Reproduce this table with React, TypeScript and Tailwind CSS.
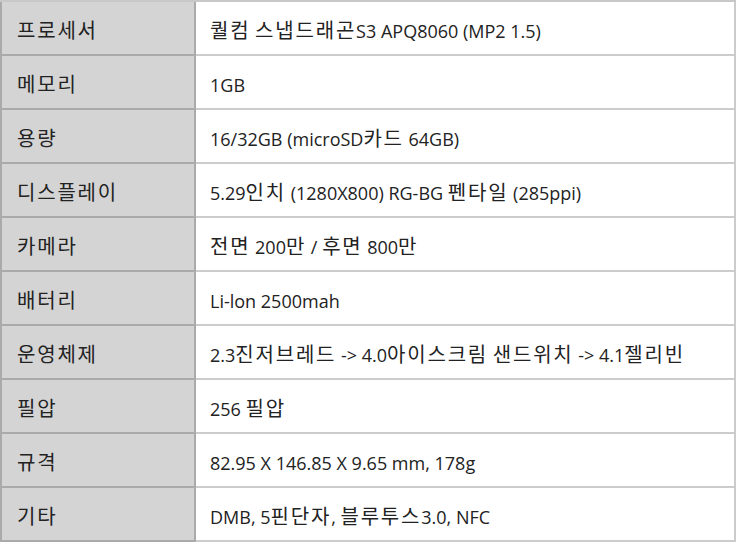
import React from "react";

const rows: [string, string][] = [
  ["프로세서", "퀄컴 스냅드래곤S3 APQ8060 (MP2 1.5)"],
  ["메모리", "1GB"],
  ["용량", "16/32GB (microSD카드 64GB)"],
  ["디스플레이", "5.29인치 (1280X800) RG-BG 펜타일 (285ppi)"],
  ["카메라", "전면 200만 / 후면 800만"],
  ["배터리", "Li-lon 2500mah"],
  ["운영체제", "2.3진저브레드 -> 4.0아이스크림 샌드위치 -> 4.1젤리빈"],
  ["필압", "256 필압"],
  ["규격", "82.95 X 146.85 X 9.65 mm, 178g"],
  ["기타", "DMB, 5핀단자, 블루투스3.0, NFC"],
];

function Mixed({ text }: { text: string }) {
  const parts = text.split(/([\uAC00-\uD7A3]+)/).filter((p) => p.length > 0);
  return (
    <span>
      {parts.map((p, i) =>
        /[\uAC00-\uD7A3]/.test(p) ? (
          <span key={i} className="text-[20px] tracking-[1.8px]">
            {p}
          </span>
        ) : (
          <span key={i}>{p}</span>
        )
      )}
    </span>
  );
}

export default function App() {
  return (
    <div
      className="w-[737px] h-[545px] bg-white text-[18px] text-[#222] leading-none"
      style={{ fontFamily: '"Open Sans", "Noto Sans CJK KR", sans-serif' }}
    >
      <div className="w-[736px] flex flex-col border-t-2 border-[#c8c8c8]">
        {rows.map(([k, v]) => (
          <div key={k} className="flex h-[54px]">
            <div className="w-[196px] shrink-0 bg-[#d4d4d4] border-l-2 border-r-2 border-b-2 border-[#aaaaaa] flex items-center pl-[15px] pt-[5px]">
              <Mixed text={k} />
            </div>
            <div className="flex-1 border-r-2 border-b-2 border-[#cccccc] flex items-center pl-[14px] pt-[5px]">
              <Mixed text={v} />
            </div>
          </div>
        ))}
      </div>
    </div>
  );
}
